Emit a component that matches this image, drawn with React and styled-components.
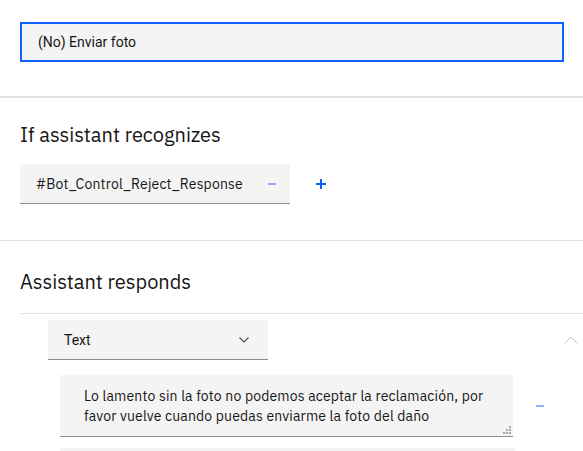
import styled, { createGlobalStyle } from "styled-components";

const GlobalStyle = createGlobalStyle`
  body {
    margin: 0;
    background: #ffffff;
    color: #161616;
    font-family: "IBM Plex Sans", "Roboto", "Liberation Sans", sans-serif;
  }
`;

const Page = styled.div`
  display: flex;
  flex-direction: column;
  width: 583px;
  overflow: hidden;
`;

const TopSection = styled.div`
  padding: 22px 19px 34px 20px;
`;

const TitleInput = styled.div`
  box-sizing: border-box;
  height: 40px;
  display: flex;
  align-items: center;
  padding: 0 16px;
  background: #f4f4f4;
  border: 2px solid #0f62fe;
  font-family: "Roboto", sans-serif;
  font-size: 14px;
  color: #161616;
`;

const Divider = styled.div`
  height: ${(p) => p.$size || 1}px;
  background: #e0e0e0;
`;

const Section = styled.section`
  display: flex;
  flex-direction: column;
  padding: ${(p) => p.$padding};
`;

const Heading = styled.h2`
  margin: 0 0 0 20px;
  font-size: 20px;
  line-height: 26px;
  font-weight: 400;
  color: #161616;
`;

const ConditionRow = styled.div`
  display: flex;
  align-items: center;
  gap: 26px;
  margin: 16px 0 0 20px;
`;

const Chip = styled.div`
  box-sizing: border-box;
  width: 270px;
  height: 40px;
  display: flex;
  align-items: center;
  justify-content: space-between;
  padding: 0 14px 0 16px;
  background: #f4f4f4;
  border-bottom: 1px solid #8d8d8d;
  font-size: 14px;
  letter-spacing: 0.16px;
`;

const IconButton = styled.button`
  display: flex;
  align-items: center;
  justify-content: center;
  padding: 0;
  border: 0;
  background: none;
  color: ${(p) => (p.$disabled ? "#8ab4f8" : "#0f62fe")};
`;

const Responses = styled.div`
  margin: 18px 0 0 20px;
  border-top: 1px solid #e0e0e0;
  display: flex;
  flex-direction: column;
`;

const SelectRow = styled.div`
  display: flex;
  align-items: center;
  justify-content: space-between;
  padding: 6px 5px 0 28px;
`;

const Select = styled.div`
  box-sizing: border-box;
  width: 220px;
  height: 40px;
  display: flex;
  align-items: center;
  justify-content: space-between;
  padding: 0 19px 0 16px;
  background: #f4f4f4;
  border-bottom: 1px solid #8d8d8d;
  font-family: "Roboto", sans-serif;
  font-size: 14px;
  color: #161616;
`;

const ResponseRow = styled.div`
  display: flex;
  align-items: center;
  gap: 23px;
  padding: 15px 0 0 40px;
`;

const TextArea = styled.div`
  position: relative;
  box-sizing: border-box;
  width: 453px;
  height: 62px;
  padding: 11px 16px 0 24px;
  background: #f4f4f4;
  border-bottom: 1px solid #8d8d8d;
  font-size: 14px;
  line-height: 20px;
  letter-spacing: 0.16px;
  color: #161616;
`;

const ResizeHandle = styled.svg`
  position: absolute;
  right: 2px;
  bottom: 2px;
`;

const NextBox = styled.div`
  margin: 11px 0 0 40px;
  width: 455px;
  height: 20px;
  background: #f4f4f4;
`;

function Minus() {
  return (
    <svg width="8" height="2" viewBox="0 0 8 2">
      <rect width="8" height="2" fill="currentColor" />
    </svg>
  );
}

function Plus() {
  return (
    <svg width="10" height="10" viewBox="0 0 10 10">
      <rect x="4" y="0" width="2" height="10" fill="currentColor" />
      <rect x="0" y="4" width="10" height="2" fill="currentColor" />
    </svg>
  );
}

export default function App() {
  return (
    <Page>
      <GlobalStyle />
      <TopSection>
        <TitleInput>(No) Enviar foto</TitleInput>
      </TopSection>
      <Divider $size={2} />
      <Section $padding="24px 0 36px">
        <Heading>If assistant recognizes</Heading>
        <ConditionRow>
          <Chip>
            #Bot_Control_Reject_Response
            <IconButton $disabled>
              <Minus />
            </IconButton>
          </Chip>
          <IconButton>
            <Plus />
          </IconButton>
        </ConditionRow>
      </Section>
      <Divider />
      <Section $padding="28px 0 0">
        <Heading>Assistant responds</Heading>
        <Responses>
          <SelectRow>
            <Select>
              Text
              <svg width="10" height="6" viewBox="0 0 10 6">
                <path d="M0.5 0.5 L5 5 L9.5 0.5" fill="none" stroke="#525252" strokeWidth="1.2" />
              </svg>
            </Select>
            <svg width="14" height="8" viewBox="0 0 14 8">
              <path d="M0.5 7.5 L7 1 L13.5 7.5" fill="none" stroke="#c6c6c6" strokeWidth="1" />
            </svg>
          </SelectRow>
          <ResponseRow>
            <TextArea>
              Lo lamento sin la foto no podemos aceptar la reclamación, por favor vuelve cuando puedas enviarme la foto del daño
              <ResizeHandle width="8" height="8" viewBox="0 0 8 8">
                <rect x="6" y="0" width="2" height="2" fill="#a8a8a8" />
                <rect x="3" y="3" width="2" height="2" fill="#a8a8a8" />
                <rect x="6" y="3" width="2" height="2" fill="#a8a8a8" />
                <rect x="0" y="6" width="2" height="2" fill="#a8a8a8" />
                <rect x="3" y="6" width="2" height="2" fill="#a8a8a8" />
                <rect x="6" y="6" width="2" height="2" fill="#a8a8a8" />
              </ResizeHandle>
            </TextArea>
            <IconButton $disabled>
              <Minus />
            </IconButton>
          </ResponseRow>
          <NextBox />
        </Responses>
      </Section>
    </Page>
  );
}
